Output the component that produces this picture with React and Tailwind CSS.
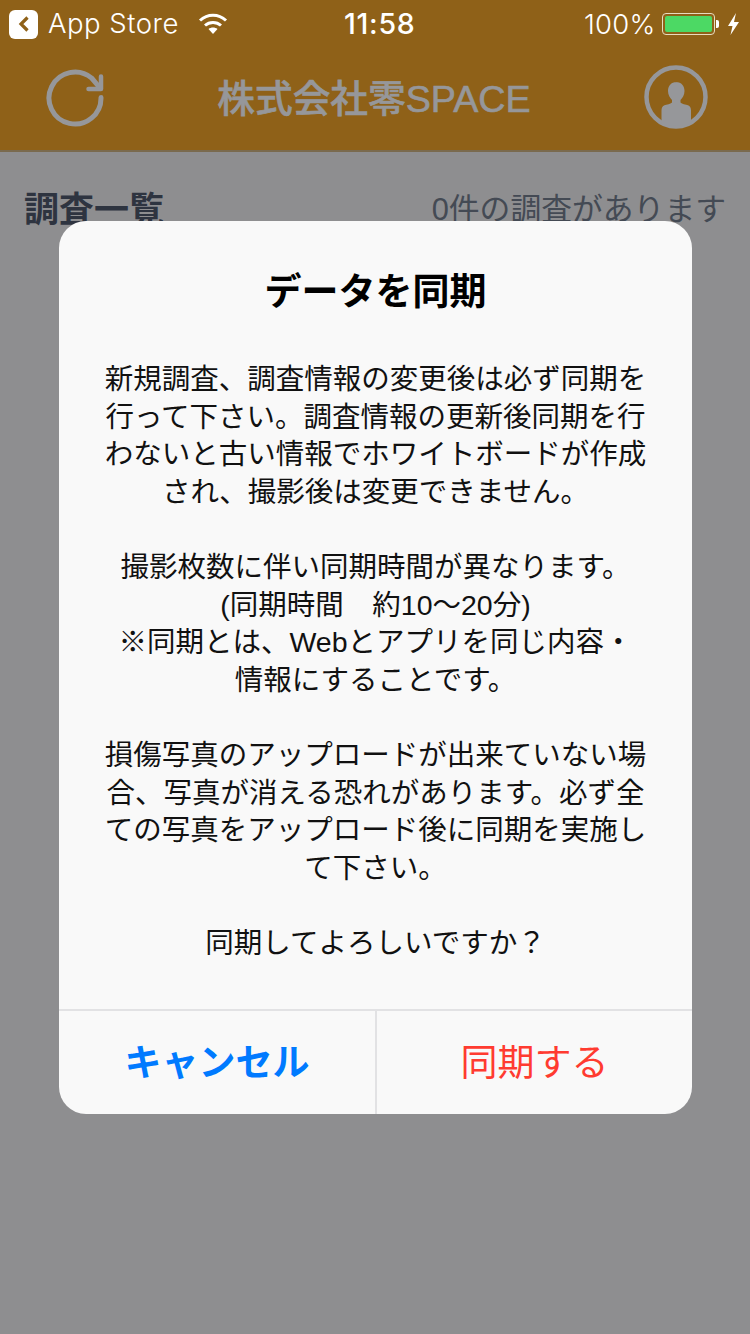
const jp = { fontFamily: '"Liberation Sans", "Noto Sans CJK JP", sans-serif' };
const lat = { fontFamily: 'Inter, "Noto Sans CJK JP", sans-serif' };

function Paragraph({ lines, className = "" }) {
  return (
    <div className={className}>
      {lines.map((l) => (
        <div key={l} className="h-[37.6px] leading-[37.6px] whitespace-nowrap">{l}</div>
      ))}
    </div>
  );
}

export default function App() {
  return (
    <div className="relative w-[750px] h-[1334px] overflow-hidden bg-[#8e8e90] text-[#2e3440]" style={jp}>
      <header className="h-[152px] bg-[#8f6118] border-b-2 border-[#7a6a4e] flex flex-col">
        <div className="h-[48px] relative flex items-center text-white" style={lat}>
          <div className="ml-[9px] w-[29px] h-[29px] rounded-[6px] bg-white flex items-center justify-center">
            <svg width="14" height="18" viewBox="0 0 14 18"><path d="M10.5 2.5 4 9l6.500 6.500" fill="none" stroke="#8f6118" strokeWidth="3.200" /></svg>
          </div>
          <span className="ml-[10px] text-[27.500px] leading-none tracking-[0.5px] font-light">App Store</span>
          <svg className="ml-[19px]" width="30" height="24" viewBox="0 0 30 24">
            <path d="M2 8.500C9.500 1.500 20.500 1.500 28 8.500" fill="none" stroke="white" strokeWidth="3" />
            <path d="M7 13.500C11.500 9.500 18.500 9.500 23 13.500" fill="none" stroke="white" strokeWidth="3" />
            <path d="M10.500 17 15 22l4.500-5c-2.500-2-6.500-2-9 0z" fill="white" />
          </svg>
          <span className="absolute left-[344px] top-[8px] text-[28.500px] leading-[32px] font-medium tracking-[0.7px]">11:58</span>
          <span className="absolute left-[584px] top-[8px] text-[27.500px] leading-[32px] tracking-[0.2px] font-light">100%</span>
          <div className="absolute left-[662px] top-[13px] w-[53px] h-[22px] rounded-[4px] border border-[#e8dcc0] p-[2px]">
            <div className="w-full h-full rounded-[2px] bg-[#4cd964]" />
          </div>
          <div className="absolute left-[716px] top-[20px] w-[3px] h-[8px] rounded-r-[2px] bg-white" />
          <svg className="absolute left-[727px] top-[12px]" width="13" height="24" viewBox="0 0 13 24"><path d="M9 1 1 14h4.500L3.500 23 12 10H7z" fill="white" /></svg>
        </div>
        <div className="flex-1 flex items-center justify-between pl-[46px] pr-[42px] text-[#96979a]">
          <svg width="58" height="58" viewBox="0 0 58 58" className="mt-[-2px]">
            <path d="M55 28.500A26 26 0 1 1 45.700 9.100L54 19" fill="none" stroke="#96979a" strokeWidth="5" strokeLinecap="round" />
            <path d="M55 7.500V20H42.500" fill="none" stroke="#96979a" strokeWidth="4.500" strokeLinecap="round" strokeLinejoin="round" />
          </svg>
          <span className="text-[37.700px] leading-none font-medium mt-[2px] [-webkit-text-stroke:0.6px_#96979a]">株式会社零SPACE</span>
          <svg width="64" height="64" viewBox="0 0 64 64" className="mt-[-4px]">
            <circle cx="32" cy="32" r="29.500" fill="none" stroke="#96979a" strokeWidth="4.500" />
            <path d="M32 17c5.500 0 8.500 4 8.500 9 0 4-2 7-4 9v2.500c2.500 2 7 2.500 8 3 1.500.5 2.500 2.500 2.500 5V58c-4 2-9 3-14.500 3S21.500 60 17.500 58V45.500c0-2.500 1-4.500 2.500-5 1-.5 5.500-1 8-3V35c-2-2-4-5-4-9 0-5 3-9 8.500-9z" fill="#96979a" />
          </svg>
        </div>
      </header>

      <div className="flex items-start justify-between pl-[24px] pr-[24px] pt-[36px]">
        <span className="text-[35px] leading-[44px] font-bold">調査一覧</span>
        <span className="text-[30.800px] leading-[44px] text-[#444a54]">0件の調査があります</span>
      </div>

      <div className="absolute left-[59px] top-[221px] w-[633px] h-[893px] rounded-[27px] bg-[#f9f9f9] flex flex-col text-[#111]">
        <h1 className="mt-[46px] text-center text-[37px] leading-[52px] font-bold text-black">データを同期</h1>
        <div className="mt-[42px] flex-1 text-center text-[28.500px]">
          <Paragraph lines={["新規調査、調査情報の変更後は必ず同期を", "行って下さい。調査情報の更新後同期を行", "わないと古い情報でホワイトボードが作成", "され、撮影後は変更できません。"]} />
          <Paragraph className="mt-[37.600px]" lines={["撮影枚数に伴い同期時間が異なります。", "(同期時間　約10〜20分)", "※同期とは、Webとアプリを同じ内容・", "情報にすることです。"]} />
          <Paragraph className="mt-[37.600px]" lines={["損傷写真のアップロードが出来ていない場", "合、写真が消える恐れがあります。必ず全", "ての写真をアップロード後に同期を実施し", "て下さい。"]} />
          <Paragraph className="mt-[37.600px]" lines={["同期してよろしいですか？"]} />
        </div>
        <div className="h-[105px] flex border-t-2 border-[#e2e2e4] text-[37px]">
          <button className="w-[318px] border-r-2 border-[#e2e2e4] font-bold text-[#007aff] pt-[2px]">キャンセル</button>
          <button className="flex-1 text-[#ff3b30] pt-[2px]">同期する</button>
        </div>
      </div>
    </div>
  );
}
